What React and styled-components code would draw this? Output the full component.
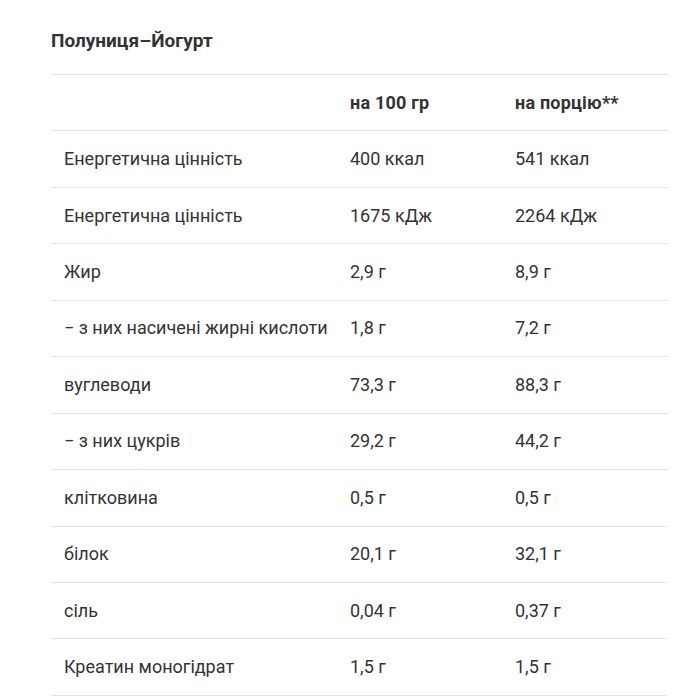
import React from 'react';
import styled, { createGlobalStyle } from 'styled-components';

const GlobalStyle = createGlobalStyle`
  body {
    margin: 0;
    background: #fff;
    font-family: Roboto, "Noto Sans", sans-serif;
    color: #333;
  }
`;

const Wrapper = styled.div`
  padding: 29px 33px 0 51px;
`;

const Title = styled.h3`
  margin: 0 0 21px;
  font-size: 19px;
  line-height: 24px;
  font-weight: 700;
  color: #333;
`;

const Table = styled.table`
  width: 616px;
  border-collapse: collapse;
  table-layout: fixed;
  border-top: 1px solid #e3e3e3;
`;

const Row = styled.tr`
  border-bottom: 1px solid #e3e3e3;
`;

const Cell = styled.td`
  height: 55.45px;
  padding: 0 13px;
  font-size: 18px;
  line-height: 24px;
  font-weight: ${(props) => (props.head ? 700 : 400)};
  letter-spacing: ${(props) => (props.head ? '0.2px' : '0')};
  color: #333;
  vertical-align: middle;
  white-space: nowrap;
`;

const rows = [
  ['Енергетична цінність', '400 ккал', '541 ккал'],
  ['Енергетична цінність', '1675 кДж', '2264 кДж'],
  ['Жир', '2,9 г', '8,9 г'],
  ['− з них насичені жирні кислоти', '1,8 г', '7,2 г'],
  ['вуглеводи', '73,3 г', '88,3 г'],
  ['− з них цукрів', '29,2 г', '44,2 г'],
  ['клітковина', '0,5 г', '0,5 г'],
  ['білок', '20,1 г', '32,1 г'],
  ['сіль', '0,04 г', '0,37 г'],
  ['Креатин моногідрат', '1,5 г', '1,5 г'],
];

function App() {
  return (
    <Wrapper>
      <GlobalStyle />
      <Title>Полуниця–Йогурт</Title>
      <Table>
        <colgroup>
          <col style={{ width: 286 }} />
          <col style={{ width: 165 }} />
          <col style={{ width: 165 }} />
        </colgroup>
        <tbody>
          <Row>
            <Cell head />
            <Cell head>на 100 гр</Cell>
            <Cell head>на порцію**</Cell>
          </Row>
          {rows.map((r, i) => (
            <Row key={i}>
              <Cell>{r[0]}</Cell>
              <Cell>{r[1]}</Cell>
              <Cell>{r[2]}</Cell>
            </Row>
          ))}
        </tbody>
      </Table>
    </Wrapper>
  );
}

export default App;
